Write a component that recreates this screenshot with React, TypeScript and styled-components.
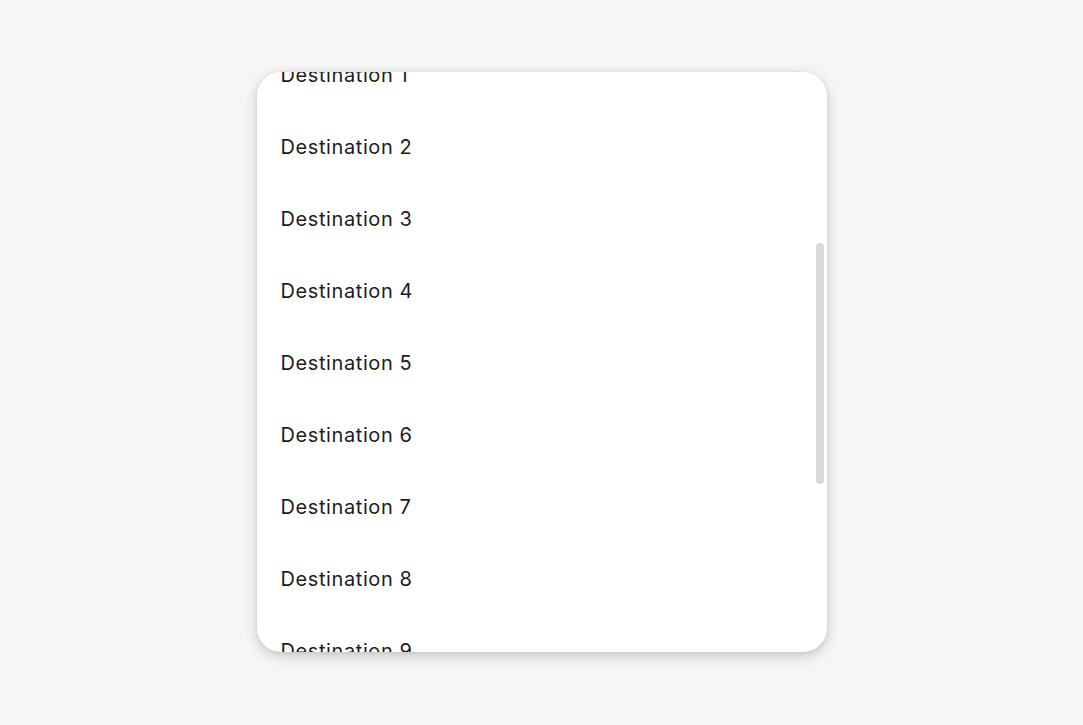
import styled, { createGlobalStyle } from "styled-components";

const GlobalStyle = createGlobalStyle`
  html, body {
    margin: 0;
    padding: 0;
    background: #f6f6f6;
  }
`;

const Page = styled.div`
  display: flex;
  justify-content: center;
  align-items: flex-start;
  box-sizing: border-box;
  height: 100vh;
  padding-top: 72px;
  background: #f6f6f6;
`;

const Card = styled.div`
  position: relative;
  width: 570px;
  height: 580px;
  background: #ffffff;
  border-radius: 24px;
  overflow: hidden;
  box-shadow: 0 4px 14px rgba(0, 0, 0, 0.18), 0 1px 4px rgba(0, 0, 0, 0.08);
`;

const List = styled.ul<{ $offset: number }>`
  list-style: none;
  margin: 0;
  padding: 0;
  transform: translateY(${(p) => -p.$offset}px);
`;

const Item = styled.li`
  display: flex;
  align-items: center;
  height: 72px;
  padding: 0 24px;
  font-family: Inter, "Noto Sans", sans-serif;
  font-size: 20px;
  letter-spacing: 0.6px;
  color: #1c1c1c;
`;

const Thumb = styled.div`
  position: absolute;
  top: 171px;
  right: 3px;
  width: 8px;
  height: 241px;
  border-radius: 4px;
  background: #d9d9d9;
`;

const destinations = Array.from({ length: 10 }, (_, i) => `Destination ${i + 1}`);

const App = () => {
  return (
    <Page>
      <GlobalStyle />
      <Card>
        <List $offset={33}>
          {destinations.map((d) => (
            <Item key={d}>{d}</Item>
          ))}
        </List>
        <Thumb />
      </Card>
    </Page>
  );
};

export default App;
